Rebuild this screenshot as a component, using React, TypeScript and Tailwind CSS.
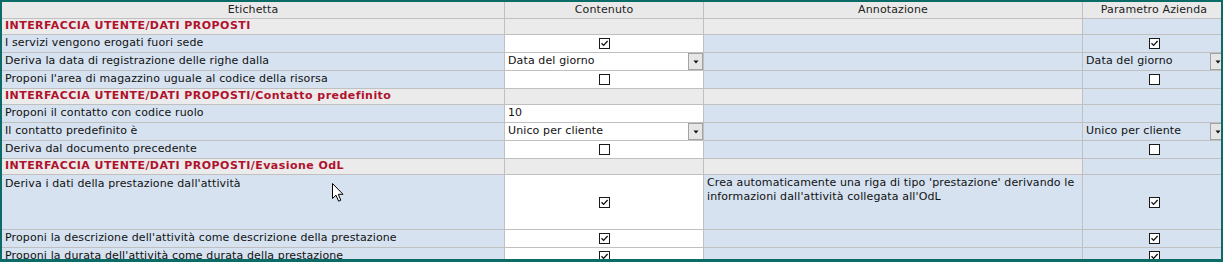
import React from "react";

type Row =
  | { kind: "section"; label: string }
  | { kind: "check"; label: string; c: boolean; p: boolean; note?: string; tall?: boolean }
  | { kind: "select"; label: string; value: string }
  | { kind: "text"; label: string; value: string };

const rows: Row[] = [
  { kind: "section", label: "INTERFACCIA UTENTE/DATI PROPOSTI" },
  { kind: "check", label: "I servizi vengono erogati fuori sede", c: true, p: true },
  { kind: "select", label: "Deriva la data di registrazione delle righe dalla", value: "Data del giorno" },
  { kind: "check", label: "Proponi l'area di magazzino uguale al codice della risorsa", c: false, p: false },
  { kind: "section", label: "INTERFACCIA UTENTE/DATI PROPOSTI/Contatto predefinito" },
  { kind: "text", label: "Proponi il contatto con codice ruolo", value: "10" },
  { kind: "select", label: "Il contatto predefinito è", value: "Unico per cliente" },
  { kind: "check", label: "Deriva dal documento precedente", c: false, p: false },
  { kind: "section", label: "INTERFACCIA UTENTE/DATI PROPOSTI/Evasione OdL" },
  {
    kind: "check",
    label: "Deriva i dati della prestazione dall'attività",
    c: true,
    p: true,
    tall: true,
    note: "Crea automaticamente una riga di tipo 'prestazione' derivando le informazioni dall'attività collegata all'OdL",
  },
  { kind: "check", label: "Proponi la descrizione dell'attività come descrizione della prestazione", c: true, p: true },
  { kind: "check", label: "Proponi la durata dell'attività come durata della prestazione", c: true, p: true },
];

const cols = "grid grid-cols-[503px_199px_379px_143px]";
const cell = "border-r border-b border-[#c0c0c0] min-w-0 overflow-hidden";

function CheckBox({ checked }: { checked: boolean }) {
  return (
    <span className="inline-flex h-[11px] w-[11px] items-center justify-center border border-[#1a1a1a] bg-white">
      {checked && (
        <svg width="9" height="9" viewBox="0 0 9 9">
          <path d="M1.5 4.2 L3.6 6.4 L7.6 2" fill="none" stroke="#111" strokeWidth="1.3" />
        </svg>
      )}
    </span>
  );
}

function Select({ value }: { value: string }) {
  return (
    <div className="flex h-full w-full items-center">
      <span className="flex-1 pl-[3px]">{value}</span>
      <span className="flex h-full w-[15px] shrink-0 items-center justify-center border border-[#a3a3a3] bg-[#e6e6e6]">
        <svg width="6" height="4" viewBox="0 0 6 4">
          <path d="M0.5 0.5 L5.5 0.5 L3 3.5 Z" fill="#111" />
        </svg>
      </span>
    </div>
  );
}

export default function App() {
  return (
    <div
      className="relative h-[262px] w-[1223px] overflow-hidden border-t-2 border-l-2 border-r-2 border-b-[3px] border-[#0b6b66] bg-[#d6e2f0] text-[11px] tracking-[0.12px] text-[#111]"
      style={{ fontFamily: '"DejaVu Sans", Verdana, sans-serif' }}
    >
      <div className="w-[1224px]">
        {/* header */}
        <div className={`${cols} h-[17px] bg-[#e9e9e9] text-[#222]`}>
          {["Etichetta", "Contenuto", "Annotazione", "Parametro Azienda"].map((h) => (
            <div key={h} className={`${cell} flex items-center justify-center`}>
              {h}
            </div>
          ))}
        </div>

        {rows.map((r, i) => {
          if (r.kind === "section") {
            return (
              <div key={i} className={`${cols} h-[16px]`}>
                <div className={`${cell} flex items-center bg-[#ebebeb] pl-[3px] font-bold tracking-[0.45px] whitespace-nowrap text-[#b0122e]`}>
                  {r.label}
                </div>
                <div className={`${cell} bg-[#ebebeb]`} />
                <div className={`${cell} bg-[#ebebeb]`} />
                <div className={`${cell} bg-[#d6e2f0]`} />
              </div>
            );
          }
          const tall = r.kind === "check" && r.tall;
          return (
            <div key={i} className={`${cols} ${tall ? "h-[55px]" : "h-[18px]"}`}>
              <div className={`${cell} flex pl-[3px] whitespace-nowrap ${tall ? "items-start pt-[1px]" : "items-center"}`}>
                {r.label}
              </div>
              <div className={`${cell} flex items-center bg-white ${r.kind === "check" ? "justify-center" : ""}`}>
                {r.kind === "check" && <CheckBox checked={r.c} />}
                {r.kind === "select" && <Select value={r.value} />}
                {r.kind === "text" && <span className="pl-[3px]">{r.value}</span>}
              </div>
              <div className={`${cell} px-[3px] pt-[1px] leading-[14px]`}>
                {r.kind === "check" && r.note}
              </div>
              <div className={`${cell} flex items-center ${r.kind === "check" ? "justify-center" : ""}`}>
                {r.kind === "check" && <CheckBox checked={r.p} />}
                {r.kind === "select" && <Select value={r.value} />}
              </div>
            </div>
          );
        })}
      </div>

      {/* mouse pointer */}
      <svg className="absolute left-[330px] top-[181px]" width="13" height="20" viewBox="0 0 13 20">
        <path
          d="M0.5 0.5 L0.5 15.5 L4 12.2 L6.6 18.2 L8.8 17.2 L6.3 11.3 L11 11.3 Z"
          fill="#fff"
          stroke="#000"
          strokeWidth="1"
          strokeLinejoin="round"
        />
      </svg>
    </div>
  );
}
